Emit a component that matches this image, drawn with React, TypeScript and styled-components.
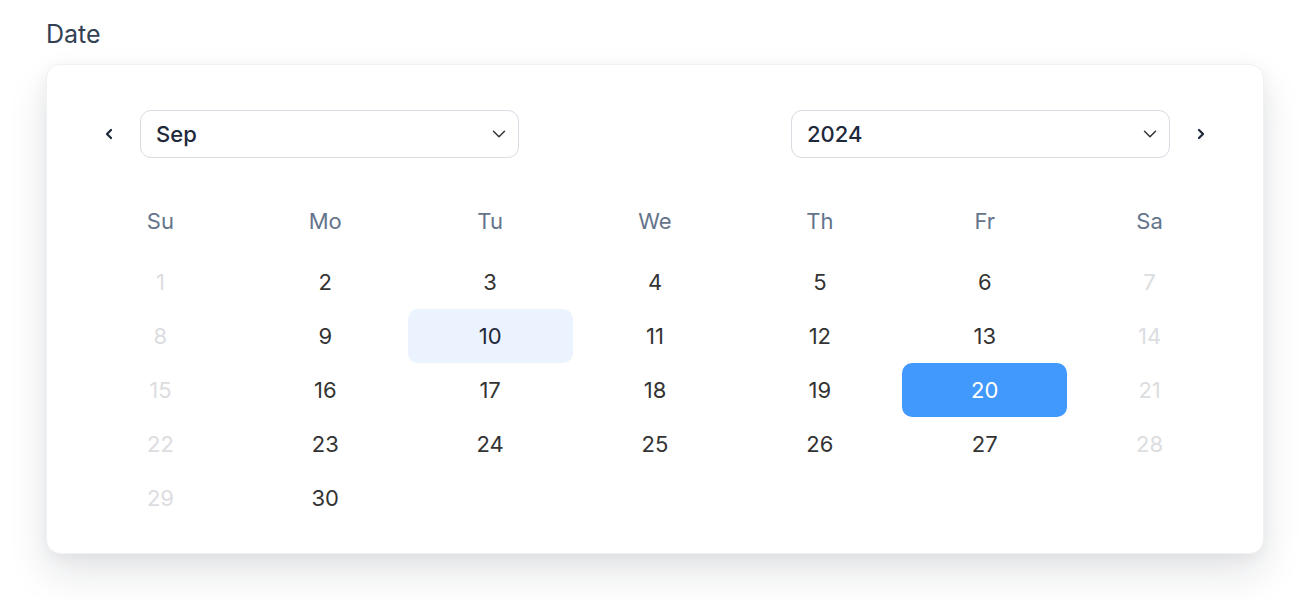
import React from "react";
import styled, { createGlobalStyle } from "styled-components";
import { ChevronDown, ChevronLeft, ChevronRight } from "lucide-react";

const Global = createGlobalStyle`
  html, body { margin: 0; padding: 0; background: #ffffff; }
  body { font-family: Inter, "Noto Sans", sans-serif; -webkit-font-smoothing: antialiased; }
`;

const Page = styled.div`
  box-sizing: border-box;
  min-height: 600px;
  padding: 17px 0 0 46px;
  width: 1300px;
`;

const Label = styled.div`
  font-size: 25px;
  line-height: 34px;
  color: #334155;
  margin-bottom: 13px;
`;

const Card = styled.div`
  width: 1218px;
  box-sizing: border-box;
  background: #ffffff;
  border: 1px solid #f0f1f3;
  border-radius: 14px;
  box-shadow: 0 20px 40px rgba(15, 23, 42, 0.11), 0 4px 16px rgba(15, 23, 42, 0.05);
  padding: 44px 31px 28px;
`;

const Header = styled.div`
  display: flex;
  align-items: center;
  height: 50px;
`;

const NavButton = styled.button`
  width: 62px;
  height: 48px;
  display: flex;
  align-items: center;
  justify-content: center;
  border: none;
  background: transparent;
  color: #1e293b;
  padding: 0;
  cursor: pointer;
`;

const Select = styled.div`
  width: 379px;
  height: 48px;
  box-sizing: border-box;
  border: 1px solid #d8dce3;
  border-radius: 11px;
  display: flex;
  align-items: center;
  justify-content: space-between;
  padding: 0 8px 0 15px;
  font-size: 22px;
  font-weight: 500;
  color: #1e293b;
`;

const Spacer = styled.div`
  flex: 1;
`;

const Grid = styled.div`
  display: grid;
  grid-template-columns: repeat(7, 1fr);
  margin-top: 40px;
`;

const WeekDay = styled.div`
  height: 44px;
  display: flex;
  align-items: center;
  justify-content: center;
  font-size: 22px;
  color: #64748b;
  margin-bottom: 12px;
`;

const Day = styled.div<{ $muted?: boolean; $today?: boolean; $selected?: boolean }>`
  height: 54px;
  display: flex;
  align-items: center;
  justify-content: center;
  font-size: 22px;
  border-radius: 10px;
  color: ${(p) => (p.$selected ? "#ffffff" : p.$muted ? "#dcdde0" : p.$today ? "#1e293b" : "#333333")};
  background: ${(p) => (p.$selected ? "#4299fd" : p.$today ? "#ebf3fe" : "transparent")};
`;

const weekDays = ["Su", "Mo", "Tu", "We", "Th", "Fr", "Sa"];

export default function App() {
  const days = Array.from({ length: 30 }, (_, i) => i + 1);
  return (
    <>
      <Global />
      <Page>
        <Label>Date</Label>
        <Card>
          <Header>
            <NavButton aria-label="Previous month">
              <ChevronLeft size={16} strokeWidth={3.4} />
            </NavButton>
            <Select>
              <span>Sep</span>
              <ChevronDown size={22} strokeWidth={1.6} color="#333" />
            </Select>
            <Spacer />
            <Select>
              <span>2024</span>
              <ChevronDown size={22} strokeWidth={1.6} color="#333" />
            </Select>
            <NavButton aria-label="Next month">
              <ChevronRight size={16} strokeWidth={3.4} />
            </NavButton>
          </Header>
          <Grid>
            {weekDays.map((d) => (
              <WeekDay key={d}>{d}</WeekDay>
            ))}
            {days.map((d) => {
              const col = (d - 1) % 7;
              return (
                <Day
                  key={d}
                  $muted={col === 0 || col === 6}
                  $today={d === 10}
                  $selected={d === 20}
                >
                  {d}
                </Day>
              );
            })}
          </Grid>
        </Card>
      </Page>
    </>
  );
}
